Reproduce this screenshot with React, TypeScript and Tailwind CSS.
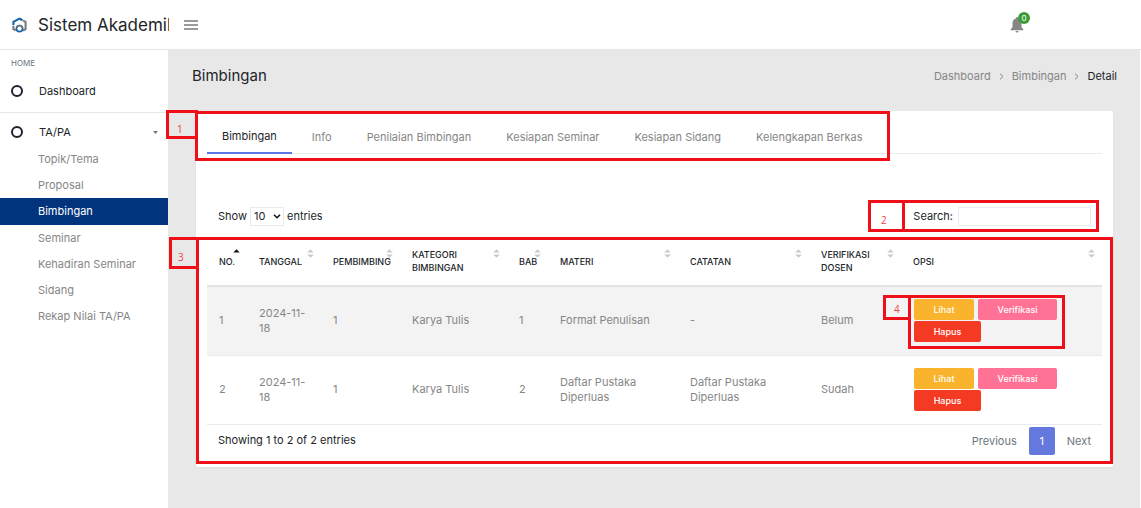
import type { ReactNode } from "react";

const menu = [
  "Topik/Tema",
  "Proposal",
  "Bimbingan",
  "Seminar",
  "Kehadiran Seminar",
  "Sidang",
  "Rekap Nilai TA/PA",
];

const tabs = [
  "Bimbingan",
  "Info",
  "Penilaian Bimbingan",
  "Kesiapan Seminar",
  "Kesiapan Sidang",
  "Kelengkapan Berkas",
];

const columns = [
  { label: "No.", width: "w-[40px]" },
  { label: "Tanggal", width: "w-[74px]" },
  { label: "Pembimbing", width: "w-[79px]" },
  { label: "Kategori Bimbingan", width: "w-[107px]" },
  { label: "Bab", width: "w-[41px]" },
  { label: "Materi", width: "w-[130px]" },
  { label: "Catatan", width: "w-[131px]" },
  { label: "Verifikasi Dosen", width: "w-[92px]" },
  { label: "Opsi", width: "" },
];

const rows = [
  ["1", "2024-11-18", "1", "Karya Tulis", "1", "Format Penulisan", "-", "Belum"],
  ["2", "2024-11-18", "1", "Karya Tulis", "2", "Daftar Pustaka Diperluas", "Daftar Pustaka Diperluas", "Sudah"],
];

/* Red outline laid over a section of the page. */
function Frame({ className }: { className: string }) {
  return (
    <span
      aria-hidden="true"
      className={`pointer-events-none absolute z-10 border-3 border-[#ee0f18] ${className}`}
    />
  );
}

/* Numbered tag that sits beside a frame. */
function Tag({ className, children }: { className: string; children: ReactNode }) {
  return (
    <span
      className={`pointer-events-none absolute z-10 flex items-end border-3 border-[#ee0f18] font-['Open_Sans',sans-serif] text-[10px] leading-[14px] text-[#ee3f48] ${className}`}
    >
      {children}
    </span>
  );
}

function Logo() {
  return (
    <svg viewBox="0 0 16 18" className="h-[17px] w-[15px] shrink-0" fill="none" strokeWidth="2.2">
      <path d="M1.500 8.500V5.200L8 1.600l3.200 1.800" stroke="#1466ab" />
      <path d="M11.800 3.700l2.700 1.500v7.600L11.800 14.400" stroke="#77797c" />
      <path d="M1.500 9.300v3.500L4 14.200" stroke="#77797c" />
      <circle cx="8" cy="12.300" r="3.300" fill="#fff" stroke="#1466ab" strokeWidth="1.800" />
      <path d="M5 11a3.300 3.300 0 0 1 6.200 0.600" stroke="#77797c" strokeWidth="1.800" />
    </svg>
  );
}

function Ring() {
  return <span aria-hidden="true" className="size-3 shrink-0 rounded-full border-2 border-[#1c2230]" />;
}

function SortIcon({ active }: { active: boolean }) {
  return (
    <svg viewBox="0 0 7 9" className="absolute top-3 right-[7px] h-[9px] w-[7px]">
      <path d="M0.300 3.600L3.500 0.300 6.700 3.600z" fill={active ? "#111" : "#c9c9c9"} />
      {!active && <path d="M0.300 5.400L3.500 8.700 6.700 5.400z" fill="#c9c9c9" />}
    </svg>
  );
}

function Header() {
  return (
    <header className="flex h-[50px] items-center border-b border-[#e6e6e6] bg-white">
      <a href="#" className="flex w-[169px] shrink-0 items-center gap-[11px] overflow-hidden pt-px pl-3 text-[17px] leading-6 whitespace-nowrap text-[#212529]">
        <Logo />
        <span>Sistem Akademik</span>
      </a>
      <button type="button" aria-label="Menu" className="ml-[15px] flex w-[14px] flex-col gap-[2px]">
        <span className="h-[2px] bg-[#9a9a9a]" />
        <span className="h-[2px] bg-[#9a9a9a]" />
        <span className="h-[2px] bg-[#9a9a9a]" />
      </button>
      <button type="button" aria-label="Notifikasi" className="relative mr-[117px] ml-auto">
        <svg viewBox="0 0 14 16" className="h-4 w-[14px]" fill="#868686">
          <path d="M7 0a1 1 0 0 0-1 1v.6C3.800 2.100 2.500 4 2.500 6.200v4L.7 12.200v1h12.600v-1l-1.800-2v-4C11.500 4 10.200 2.100 8 1.600V1a1 1 0 0 0-1-1zM5.500 14a1.500 1.500 0 0 0 3 0z" />
        </svg>
        <span className="absolute -top-[5px] left-2 flex size-3 items-center justify-center rounded-full bg-[#3c9d37] text-[8px] leading-none text-white">
          0
        </span>
      </button>
    </header>
  );
}

function Sidebar() {
  return (
    <nav className="w-[168px] shrink-0 bg-white">
      <div className="border-b border-[#e6e6e6] pt-[7px] pb-[7px]">
        <p className="px-[11px] text-[8px] leading-3 text-[#6c757d]">HOME</p>
        <a href="#" className="mt-2 flex h-7 items-center gap-4 px-[11px] text-[#212529]">
          <Ring />
          Dashboard
        </a>
      </div>
      <a href="#" className="mt-[5px] flex h-7 items-center gap-4 pr-[10px] pl-[11px] text-[#212529]">
        <Ring />
        TA/PA
        <svg viewBox="0 0 5 3" className="ml-auto h-[3px] w-[5px]" fill="#777">
          <path d="M0 0h5L2.500 3z" />
        </svg>
      </a>
      <ul>
        {menu.map((item) => (
          <li key={item}>
            <a
              href="#"
              className={
                item === "Bimbingan"
                  ? "flex h-[27px] items-center bg-[#01347c] pl-[38px] text-white"
                  : "flex h-[26px] items-center pl-[38px] text-[#868686]"
              }
            >
              {item}
            </a>
          </li>
        ))}
      </ul>
    </nav>
  );
}

function Tabs() {
  return (
    <div className="relative h-[49px] px-[11px] pb-[6px]">
      <div role="tablist" className="flex h-full gap-[5px] border-b border-[#e9ecef]">
        {tabs.map((tab, i) => (
          <button
            key={tab}
            type="button"
            role="tab"
            aria-selected={i === 0}
            className={
              i === 0
                ? "-mb-px border-b-2 border-[#5f76e8] px-[15px] pt-[10px] text-[#212529]"
                : "px-[15px] pt-[10px] text-[#868686]"
            }
          >
            {tab}
          </button>
        ))}
      </div>
      <Frame className="top-0 -left-px h-[50px] w-[695px]" />
      <Tag className="-top-px -left-[30px] h-[29px] w-8 pl-2">1</Tag>
    </div>
  );
}

function Controls() {
  return (
    <div className="relative mt-10 flex h-8 items-center justify-between pr-[22px] pl-[22px] text-[#212529]">
      <label className="flex items-center gap-[3px]">
        Show
        <span className="relative">
          <select className="h-[19px] w-[34px] appearance-none border border-[#e9ecef] bg-white pl-[3px]" defaultValue="10">
            <option>10</option>
            <option>25</option>
            <option>50</option>
          </select>
          <svg viewBox="0 0 8 5" className="pointer-events-none absolute top-[7px] right-[3px] h-[5px] w-2" fill="none" stroke="#111" strokeWidth="1.500">
            <path d="M1 0.800l3 3 3-3" />
          </svg>
        </span>
        entries
      </label>
      <label className="flex items-center gap-[5px]">
        Search:
        <input type="search" className="h-[19px] w-[133px] border border-[#e9ecef] bg-white px-1" />
      </label>
      <Frame className="top-0 right-[14px] bottom-0 w-[197px]" />
      <Tag className="top-0 right-[208px] bottom-0 w-[37px] pb-[2px] pl-[10px]">2</Tag>
    </div>
  );
}

function Actions() {
  const base = "h-[21px] rounded-xs text-center text-[9px] font-medium text-white";
  return (
    <div className="flex flex-wrap gap-x-1 gap-y-px pl-px">
      <button type="button" className={`${base} w-[60px] bg-[#f9b32d]`}>Lihat</button>
      <button type="button" className={`${base} w-[79px] bg-[#ff7296]`}>Verifikasi</button>
      <button type="button" className={`${base} w-[67px] bg-[#f53a23]`}>Hapus</button>
    </div>
  );
}

function Guidance() {
  return (
    <div className="relative mt-[5px] px-[11px] pb-[9px]">
      <table className="w-full table-fixed border-collapse text-left">
        <thead>
          <tr className="h-[49px] border-b-2 border-[#e2e4e6]">
            {columns.map((c, i) => (
              <th key={c.label} className={`relative pl-3 text-[9px] leading-[13px] font-medium text-[#212529] uppercase ${c.width}`}>
                {c.label}
                <SortIcon active={i === 0} />
              </th>
            ))}
          </tr>
        </thead>
        <tbody>
          {rows.map((row, r) => (
            <tr key={row[0]} className="h-[69px] border-b border-[#e9ecef] text-[#868686] odd:bg-[#f3f3f3]">
              {row.map((cell, i) => (
                <td key={i} className="pr-3 pl-3">{cell}</td>
              ))}
              <td className="relative px-3">
                <Actions />
                {r === 0 && (
                  <>
                    <Frame className="top-2 left-[7px] h-[54px] w-[157px]" />
                    <Tag className="top-2 -left-[18px] h-[25px] w-7 pb-px pl-2">4</Tag>
                  </>
                )}
              </td>
            </tr>
          ))}
        </tbody>
      </table>
      <div className="flex items-start justify-between pt-[2px] pr-[11px] pl-[11px]">
        <p className="leading-[26px] text-[#212529]">Showing 1 to 2 of 2 entries</p>
        <div className="flex items-center gap-3 leading-7 text-[#6c757d]">
          <button type="button">Previous</button>
          <button type="button" className="w-[26px] rounded-xs bg-[#6478dd] text-white">1</button>
          <button type="button">Next</button>
        </div>
      </div>
      <Frame className="inset-0" />
      <Tag className="top-0 -left-[27px] h-8 w-[30px] pb-[2px] pl-[6px]">3</Tag>
    </div>
  );
}

export default function App() {
  return (
    <div className="flex min-h-screen flex-col bg-white font-['Inter',sans-serif] text-[11px] leading-[15px]">
      <Header />
      <div className="flex flex-1">
        <Sidebar />
        <main className="mr-px min-w-0 flex-1 bg-[#e8e8e8] pr-[27px] pb-10 pl-7">
          <div className="flex h-[61px] items-start justify-between pt-4">
            <h1 className="-ml-1 text-[15px] leading-5 text-[#212529]">Bimbingan</h1>
            <nav aria-label="Breadcrumb" className="-mr-1 flex items-center gap-2 leading-5 text-[#868686]">
              <a href="#">Dashboard</a>
              <svg viewBox="0 0 5 7" className="h-[7px] w-[5px]" fill="none" stroke="currentColor">
                <path d="M1 0.700L4 3.500 1 6.300" />
              </svg>
              <a href="#">Bimbingan</a>
              <svg viewBox="0 0 5 7" className="h-[7px] w-[5px]" fill="none" stroke="currentColor">
                <path d="M1 0.700L4 3.500 1 6.300" />
              </svg>
              <span className="text-[#212529]">Detail</span>
            </nav>
          </div>
          <section className="rounded-xs bg-white pb-[3px] shadow-xs">
            <Tabs />
            <Controls />
            <Guidance />
          </section>
        </main>
      </div>
    </div>
  );
}
